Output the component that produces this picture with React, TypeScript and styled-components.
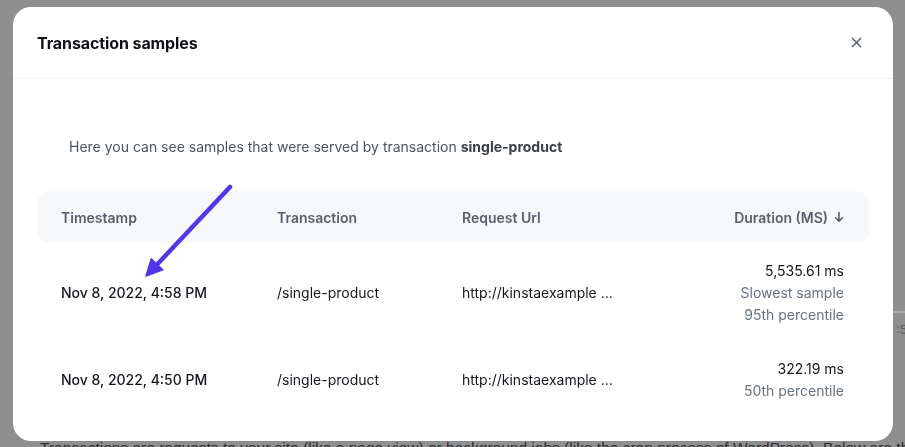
import styled, { createGlobalStyle } from "styled-components";

const GlobalStyle = createGlobalStyle`
  html, body {
    margin: 0;
    padding: 0;
    background: #8f8f8f;
    font-family: Inter, "Noto Sans", sans-serif;
    overflow: hidden;
  }
`;

const Page = styled.div`
  width: 905px;
  height: 447px;
  display: flex;
  flex-direction: column;
  justify-content: flex-end;
  position: relative;
`;

const SideLine = styled.div`
  position: absolute;
  right: 0;
  top: 311px;
  width: 12px;
  height: 2px;
  background: #a9adb3;
`;

const SideText = styled.div`
  position: absolute;
  right: -2px;
  top: 322px;
  font-size: 12px;
  color: #5a5d62;
`;

const BackText = styled.p`
  margin: 0 0 -11px 40px;
  font-family: "Liberation Sans", Arial, sans-serif;
  font-size: 15.5px;
  line-height: 20px;
  color: #2e2e2e;
  white-space: nowrap;
`;

const Modal = styled.div`
  position: fixed;
  left: 13px;
  top: 7px;
  width: 880px;
  height: 434px;
  background: #ffffff;
  border-radius: 18px;
  overflow: hidden;
`;

const Header = styled.div`
  height: 72px;
  padding: 0 24px;
  display: flex;
  align-items: center;
  justify-content: space-between;
  border-bottom: 1px solid #f1f2f4;
  box-sizing: border-box;
`;

const Title = styled.h2`
  margin: 0;
  font-size: 16px;
  font-weight: 700;
  color: #111216;
  letter-spacing: -0.1px;
`;

const CloseButton = styled.button`
  border: none;
  background: none;
  padding: 0;
  margin-right: 7px;
  display: flex;
  cursor: pointer;
`;

const Body = styled.div`
  padding: 59px 24px 0;
`;

const Intro = styled.p`
  margin: 0 0 35px 32px;
  font-size: 14px;
  line-height: 18px;
  color: #4d5462;

  strong {
    font-weight: 700;
    color: #3a404c;
  }
`;

const Row = styled.div<{ $head?: boolean }>`
  display: grid;
  grid-template-columns: 216px 185px 1fr auto;
  align-items: center;
  padding: ${(p) => (p.$head ? "0 25px 0 24px" : "17px 25px 15px 24px")};
  height: ${(p) => (p.$head ? "52px" : "auto")};
  background: ${(p) => (p.$head ? "#f7f8fa" : "transparent")};
  border-radius: ${(p) => (p.$head ? "12px" : "0")};
  box-sizing: border-box;
`;

const HeadCell = styled.div<{ $right?: boolean }>`
  font-size: 14px;
  font-weight: 600;
  color: #595f6d;
  display: flex;
  align-items: center;
  gap: 6px;
  justify-content: ${(p) => (p.$right ? "flex-end" : "flex-start")};
`;

const Cell = styled.div<{ $strong?: boolean }>`
  font-size: 14px;
  line-height: 22px;
  font-weight: ${(p) => (p.$strong ? 500 : 400)};
  color: #15171c;
`;

const DurationCell = styled.div`
  display: flex;
  flex-direction: column;
  align-items: flex-end;
  font-size: 14px;
  line-height: 22px;
`;

const Value = styled.span`
  color: #15171c;
`;

const Note = styled.span`
  color: #6a7180;
`;

const Pointer = styled.svg`
  position: absolute;
  left: 0;
  top: 0;
  pointer-events: none;
`;

const rows = [
  {
    time: "Nov 8, 2022, 4:58 PM",
    tx: "/single-product",
    url: "http://kinstaexample ...",
    value: "5,535.61 ms",
    notes: ["Slowest sample", "95th percentile"],
  },
  {
    time: "Nov 8, 2022, 4:50 PM",
    tx: "/single-product",
    url: "http://kinstaexample ...",
    value: "322.19 ms",
    notes: ["50th percentile"],
  },
];

export default function App() {
  return (
    <Page>
      <GlobalStyle />
      <SideLine />
      <SideText>:5</SideText>
      <BackText>
        Transactions are requests to your site (like a page view) or background jobs (like the cron process of WordPress). Below are the ones
      </BackText>

      <Modal>
        <Header>
          <Title>Transaction samples</Title>
          <CloseButton aria-label="Close">
            <svg width="11" height="11" viewBox="0 0 11 11">
              <path d="M1.5 1.5 L9.5 9.5 M9.5 1.5 L1.5 9.5" stroke="#5f6572" strokeWidth="1.7" strokeLinecap="round" />
            </svg>
          </CloseButton>
        </Header>
        <Body>
          <Intro>
            Here you can see samples that were served by transaction <strong>single-product</strong>
          </Intro>
          <Row $head>
            <HeadCell>Timestamp</HeadCell>
            <HeadCell>Transaction</HeadCell>
            <HeadCell>Request Url</HeadCell>
            <HeadCell $right>
              Duration (MS)
              <svg width="10" height="12" viewBox="0 0 10 12">
                <path d="M5 1.5 V10 M1.5 6.8 L5 10.3 L8.5 6.8" stroke="#595f6d" strokeWidth="1.6" fill="none" strokeLinecap="round" strokeLinejoin="round" />
              </svg>
            </HeadCell>
          </Row>
          {rows.map((r) => (
            <Row key={r.time}>
              <Cell $strong>{r.time}</Cell>
              <Cell>{r.tx}</Cell>
              <Cell>{r.url}</Cell>
              <DurationCell>
                <Value>{r.value}</Value>
                {r.notes.map((n) => (
                  <Note key={n}>{n}</Note>
                ))}
              </DurationCell>
            </Row>
          ))}
        </Body>
        <Pointer width="880" height="434" viewBox="0 0 880 434">
          <line x1="217" y1="180" x2="145" y2="256.5" stroke="#5534ee" strokeWidth="4.5" strokeLinecap="round" />
          <polygon points="133,269 149.8,262.9 138.2,251.9" fill="#5534ee" stroke="#5534ee" strokeWidth="1.5" strokeLinejoin="round" />
        </Pointer>
      </Modal>
    </Page>
  );
}
